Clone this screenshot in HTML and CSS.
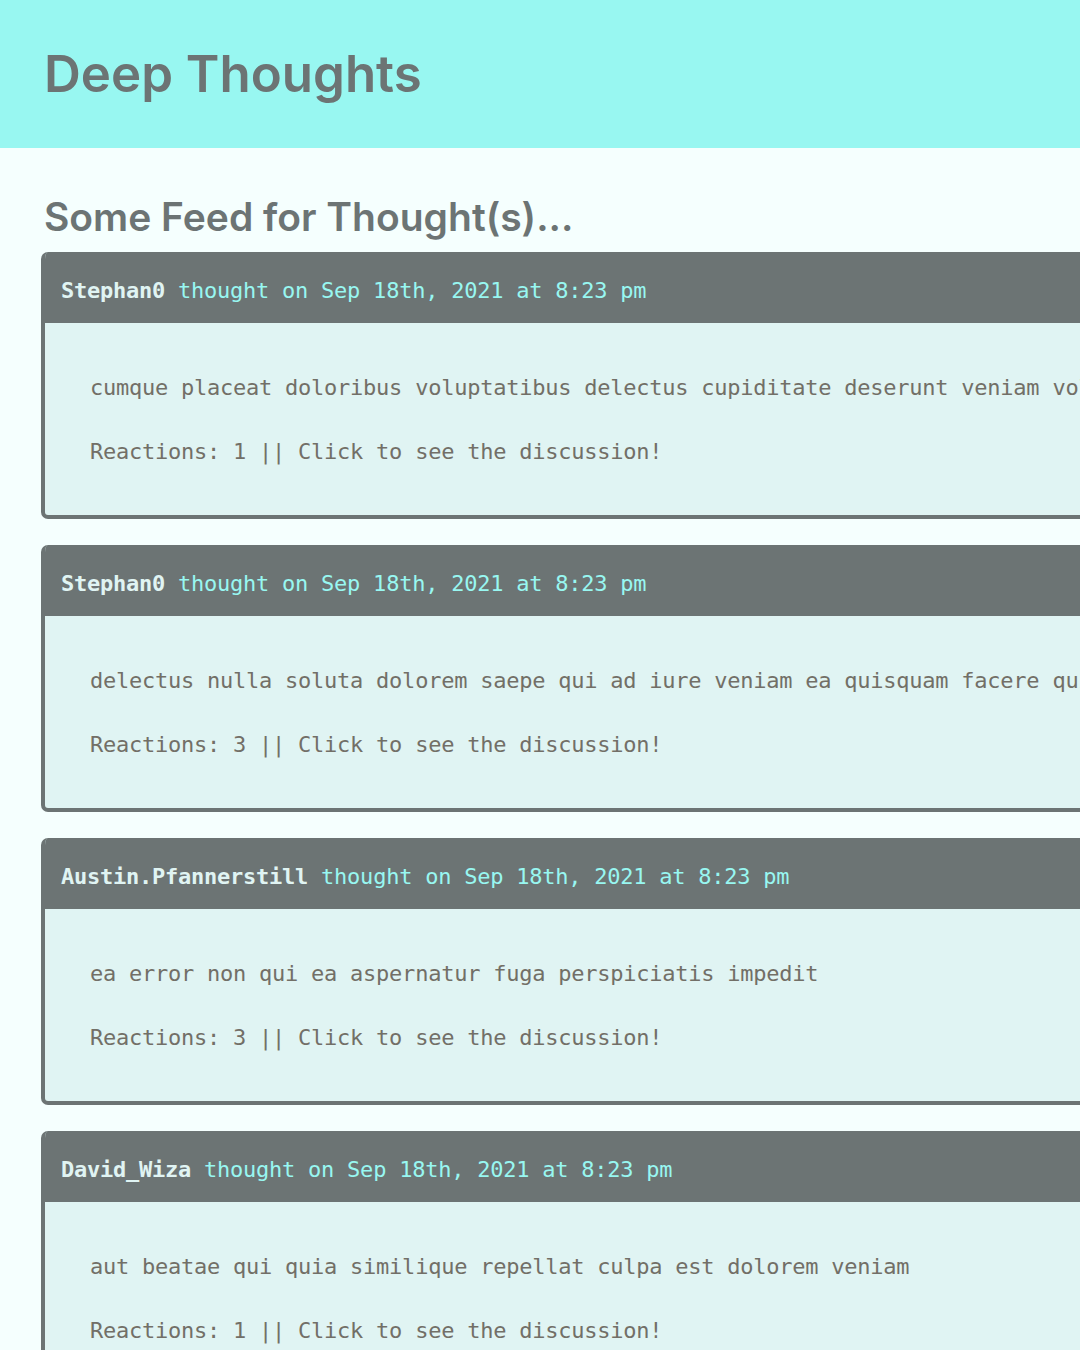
FILE: index.html
```html
<!DOCTYPE html>
<html lang="en">
<head>
<meta charset="utf-8">
<title>Deep Thoughts</title>
<link rel="stylesheet" href="styles.css">
</head>
<body>
<header class="site-header">
  <h1 class="site-title">Deep Thoughts</h1>
</header>
<main class="content">
  <h2 class="feed-title">Some Feed for Thought(s)...</h2>
  <div class="feed">
    <article class="card">
      <div class="card-header"><span class="user">Stephan0</span> thought on Sep 18th, 2021 at 8:23 pm</div>
      <div class="card-body">
        <p>cumque placeat doloribus voluptatibus delectus cupiditate deserunt veniam voluptas</p>
        <p>Reactions: 1 || Click to see the discussion!</p>
      </div>
    </article>
    <article class="card">
      <div class="card-header"><span class="user">Stephan0</span> thought on Sep 18th, 2021 at 8:23 pm</div>
      <div class="card-body">
        <p>delectus nulla soluta dolorem saepe qui ad iure veniam ea quisquam facere quia</p>
        <p>Reactions: 3 || Click to see the discussion!</p>
      </div>
    </article>
    <article class="card">
      <div class="card-header"><span class="user">Austin.Pfannerstill</span> thought on Sep 18th, 2021 at 8:23 pm</div>
      <div class="card-body">
        <p>ea error non qui ea aspernatur fuga perspiciatis impedit</p>
        <p>Reactions: 3 || Click to see the discussion!</p>
      </div>
    </article>
    <article class="card">
      <div class="card-header"><span class="user">David_Wiza</span> thought on Sep 18th, 2021 at 8:23 pm</div>
      <div class="card-body">
        <p>aut beatae qui quia similique repellat culpa est dolorem veniam</p>
        <p>Reactions: 1 || Click to see the discussion!</p>
      </div>
    </article>
  </div>
</main>
</body>
</html>
```
FILE: styles.css
```css
html, body {
  margin: 0;
  padding: 0;
}
body {
  background: #f5fffe;
  overflow: hidden;
  width: 1080px;
  height: 1350px;
  font-family: "Inter", "Lato", "Liberation Sans", sans-serif;
}
.site-header {
  background: #98f7f1;
  height: 148px;
  display: flex;
  align-items: center;
  padding: 0 44px;
}
.site-title {
  margin: 0;
  font-size: 51px;
  font-weight: 600;
  color: #6c7474;
  line-height: 1;
  padding-bottom: 2px;
}
.content {
  padding: 0 0 0 41px;
}
.feed-title {
  margin: 44px 0 0 3px;
  font-size: 39px;
  font-weight: 600;
  color: #6c7474;
  line-height: 50px;
}
.feed {
  display: flex;
  flex-direction: column;
  gap: 26px;
  margin-top: 10px;
  width: 1300px;
}
.card {
  border: 4px solid #6c7474;
  border-top-width: 0;
  border-radius: 7px;
  background: #e0f4f3;
  overflow: hidden;
}
.card-header {
  box-sizing: border-box;
  background: #6c7474;
  color: #98f7f1;
  font-family: "DejaVu Sans Mono", "Liberation Mono", monospace;
  font-size: 22px;
  letter-spacing: -0.24px;
  height: 71px;
  padding: 5px 16px 0;
  display: flex;
  align-items: center;
  gap: 13px;
  white-space: nowrap;
}
.user {
  color: #e0f4f3;
  font-weight: 700;
}
.card-body {
  padding: 17px 45px 15px 45px;
  font-family: "DejaVu Sans Mono", "Liberation Mono", monospace;
  font-size: 22px;
  letter-spacing: -0.24px;
  color: #726f67;
  white-space: nowrap;
}
.card-body p {
  margin: 32px 0;
  line-height: 32px;
}
```
